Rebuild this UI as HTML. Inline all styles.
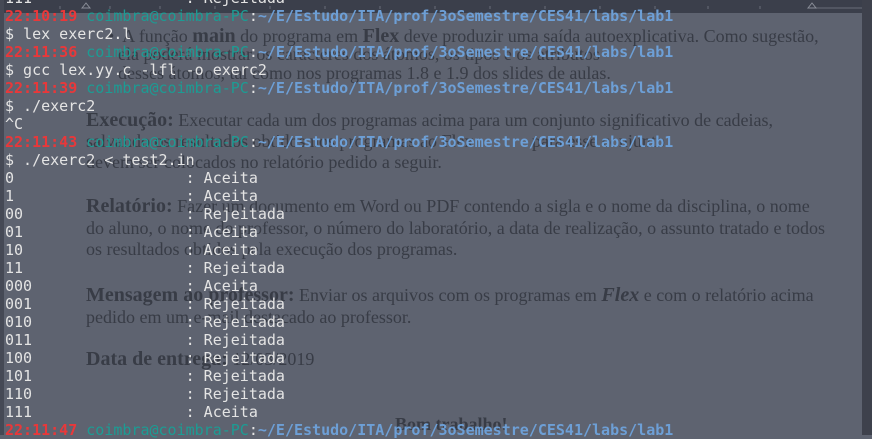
<!DOCTYPE html>
<html><head><meta charset="utf-8">
<style>
html,body{margin:0;padding:0}
body{width:872px;height:435px;overflow:hidden;background:#5e6370;position:relative;font-family:"DejaVu Sans Mono",monospace}
.top{position:absolute;left:0;top:0;width:872px;height:13px;background:#3b3f4b}
.right{position:absolute;left:862px;top:0;width:10px;height:435px;background:#3e414c}
.left{position:absolute;left:0;top:0;width:4px;height:435px;background:#454955}
.doc{position:absolute;font-family:"Liberation Serif",serif;font-size:18px;color:#383c46;white-space:nowrap}
.doc b{font-weight:bold;font-size:20px}
.term{position:absolute;left:5px;top:-11px;font-size:15px;line-height:18px;color:#e4e4e4;white-space:pre}
.r{color:#e8383a;font-weight:bold}
.t{color:#1c9c94}
.b{color:#6d9fd6;font-weight:bold}
</style></head><body>
<div class="top"></div>
<svg style="position:absolute;left:0;top:0" width="872" height="13">
<g stroke="#6a6e7a" stroke-width="1">
<line x1="60" y1="6" x2="60" y2="9"/><line x1="110" y1="6" x2="110" y2="9"/><line x1="160" y1="6" x2="160" y2="9"/>
<line x1="215" y1="6" x2="215" y2="9"/><line x1="270" y1="6" x2="270" y2="9"/><line x1="325" y1="6" x2="325" y2="9"/>
<line x1="380" y1="6" x2="380" y2="9"/><line x1="435" y1="6" x2="435" y2="9"/><line x1="490" y1="6" x2="490" y2="9"/>
<line x1="545" y1="6" x2="545" y2="9"/><line x1="600" y1="6" x2="600" y2="9"/><line x1="655" y1="6" x2="655" y2="9"/>
<line x1="708" y1="6" x2="708" y2="9"/><line x1="760" y1="6" x2="760" y2="9"/><line x1="812" y1="8" x2="862" y2="8"/>
</g>
<path d="M808 8 L812 3 L816 8 Z" fill="none" stroke="#8a8e98"/>
<path d="M82 8 L86 3 L90 8 Z" fill="none" stroke="#8a8e98"/>
</svg>
<div class="left"></div>
<div class="right"></div>

<div class="doc" style="left:108px;top:25px">&#8226;&nbsp; A função <b>main</b> do programa em <b>Flex</b> deve produzir uma saída autoexplicativa. Como sugestão,</div>
<div class="doc" style="left:118px;top:44px">ela poderá mostrar os caracteres dos átomos, os tipos e os atributos</div>
<div class="doc" style="left:118px;top:63px">desses átomos, tal como nos programas 1.8 e 1.9 dos slides de aulas.</div>
<div class="doc" style="left:86px;top:109px"><b>Execução:</b> Executar cada um dos programas acima para um conjunto significativo de cadeias,</div>
<div class="doc" style="left:86px;top:131px">salvando os resultados obtidos nos programas ao Flex&nbsp;&nbsp;&nbsp;&nbsp;&nbsp;&nbsp;&nbsp;&nbsp;&nbsp;&nbsp;&nbsp;&nbsp;&nbsp;para esse conjunto</div>
<div class="doc" style="left:86px;top:152px">devem ser colocados no relatório pedido a seguir.</div>
<div class="doc" style="left:86px;top:195px"><b>Relatório:</b> Fazer um documento em Word ou PDF contendo a sigla e o nome da disciplina, o nome</div>
<div class="doc" style="left:86px;top:218px">do aluno, o nome do professor, o número do laboratório, a data de realização, o assunto tratado e todos</div>
<div class="doc" style="left:86px;top:239px">os resultados obtidos pela execução dos programas.</div>
<div class="doc" style="left:86px;top:284px"><b>Mensagem ao professor:</b> Enviar os arquivos com os programas em <b><i>Flex</i></b> e com o relatório acima</div>
<div class="doc" style="left:86px;top:307px">pedido em um e-mail destacado ao professor.</div>
<div class="doc" style="left:86px;top:348px"><b>Data de entrega:</b> 12/03/2019</div>
<div class="doc" style="left:395px;top:414px"><b style="font-size:18px">Bom trabalho!</b></div>

<div class="term">111                 : Rejeitada
<span class="r">22:10:19</span> <span class="t">coimbra@coimbra-PC</span>:<span class="b">~/E/Estudo/ITA/prof/3oSemestre/CES41/labs/lab1</span>
$ lex exerc2.l
<span class="r">22:11:36</span> <span class="t">coimbra@coimbra-PC</span>:<span class="b">~/E/Estudo/ITA/prof/3oSemestre/CES41/labs/lab1</span>
$ gcc lex.yy.c -lfl -o exerc2
<span class="r">22:11:39</span> <span class="t">coimbra@coimbra-PC</span>:<span class="b">~/E/Estudo/ITA/prof/3oSemestre/CES41/labs/lab1</span>
$ ./exerc2
^C
<span class="r">22:11:43</span> <span class="t">coimbra@coimbra-PC</span>:<span class="b">~/E/Estudo/ITA/prof/3oSemestre/CES41/labs/lab1</span>
$ ./exerc2 &lt; test2.in
0                   : Aceita
1                   : Aceita
00                  : Rejeitada
01                  : Aceita
10                  : Aceita
11                  : Rejeitada
000                 : Aceita
001                 : Rejeitada
010                 : Rejeitada
011                 : Rejeitada
100                 : Rejeitada
101                 : Rejeitada
110                 : Rejeitada
111                 : Aceita
<span class="r">22:11:47</span> <span class="t">coimbra@coimbra-PC</span>:<span class="b">~/E/Estudo/ITA/prof/3oSemestre/CES41/labs/lab1</span></div>
</body></html>
